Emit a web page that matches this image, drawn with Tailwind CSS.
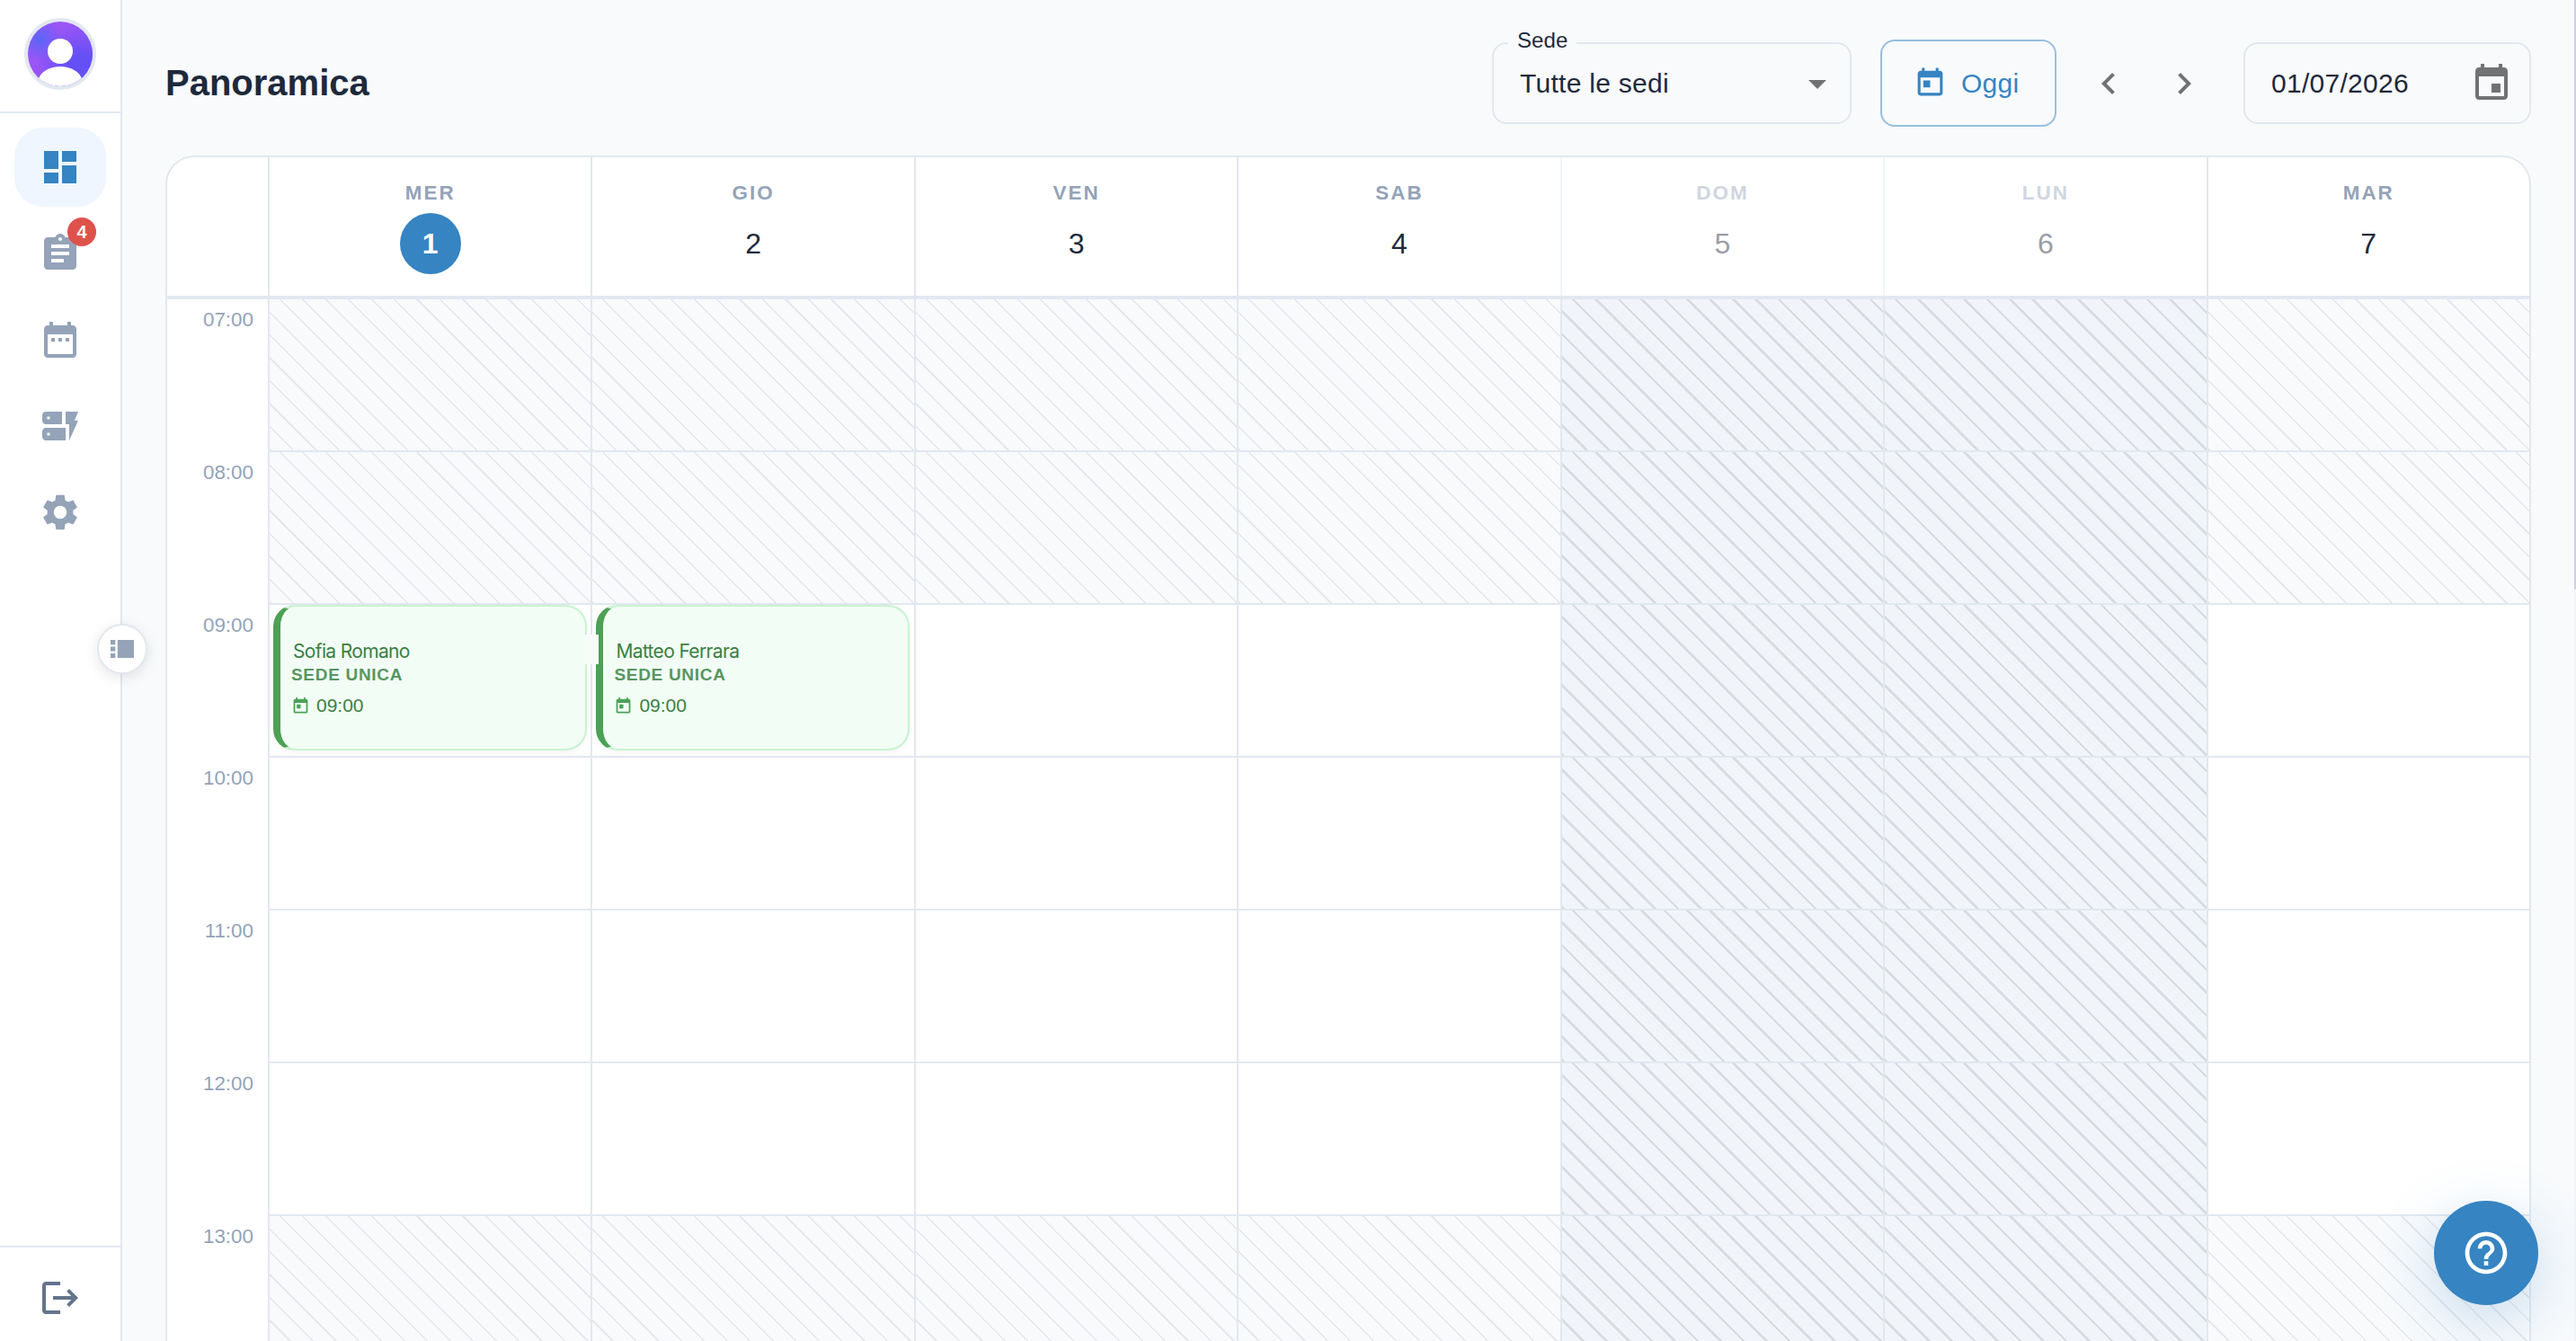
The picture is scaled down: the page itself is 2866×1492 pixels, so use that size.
<!DOCTYPE html>
<html lang="it">
<head>
<meta charset="utf-8">
<title>Panoramica</title>
<script src="https://cdn.jsdelivr.net/npm/@tailwindcss/browser@4"></script>
</head>
<body class="w-[2866px] h-[1492px] overflow-hidden bg-[#f8fafc] font-['Liberation_Sans',Arial,sans-serif] text-[#1e293b] flex relative">

<aside class="w-[136px] shrink-0 h-[1492px] bg-white border-r-2 border-[#e2e8f0] flex flex-col relative">
  <div class="h-[126px] shrink-0 border-b-2 border-[#e2e8f0] flex justify-center pt-5">
    <div class="size-20 rounded-full border-4 border-[#e2e8f0] overflow-hidden">
      <svg class="size-[72px] block" viewBox="0 0 72 72">
        <defs>
          <radialGradient id="a1" cx="0.2" cy="0.28" r="0.32"><stop offset="0" stop-color="#5865f7"/><stop offset="1" stop-color="#5865f7" stop-opacity="0"/></radialGradient>
          <radialGradient id="a2" cx="0.84" cy="0.74" r="0.72"><stop offset="0" stop-color="#6550f6"/><stop offset="0.3" stop-color="#6550f6"/><stop offset="1" stop-color="#6550f6" stop-opacity="0"/></radialGradient>
        </defs>
        <rect width="72" height="72" fill="#9a55f6"/>
        <rect width="72" height="72" fill="url(#a2)"/>
        <rect width="72" height="72" fill="url(#a1)"/>
        <circle cx="36" cy="33" r="14" fill="#fff"/>
        <path d="M11 66C14 55 25 50 36 50s22 5 25 16v6H11z" fill="#fff"/>
      </svg>
    </div>
  </div>
  <nav class="flex flex-col gap-2 pt-4 px-4 grow text-[#94a3b8]">
    <a class="h-[88px] rounded-[32px] bg-[#eff6ff] text-[#3684c2] flex items-center justify-center">
      <svg class="size-12" viewBox="0 0 24 24" fill="currentColor"><path d="M3 13h8V3H3zm0 8h8v-6H3zm10 0h8V11h-8zm0-18v6h8V3z"/></svg>
    </a>
    <a class="h-[88px] flex items-center justify-center relative">
      <svg class="size-12" viewBox="0 0 24 24" fill="currentColor"><path d="M19 3h-4.18C14.4 1.84 13.3 1 12 1s-2.4.84-2.82 2H5c-1.1 0-2 .9-2 2v14c0 1.1.9 2 2 2h14c1.1 0 2-.9 2-2V5c0-1.1-.9-2-2-2m-7 0c.55 0 1 .45 1 1s-.45 1-1 1-1-.45-1-1 .45-1 1-1m2 14H7v-2h7zm3-4H7v-2h10zm0-4H7V7h10z"/></svg>
      <span class="absolute left-[59px] top-1 size-8 rounded-full bg-[#de524c] text-white text-[20px] leading-none font-bold flex items-center justify-center">4</span>
    </a>
    <a class="h-[88px] flex items-center justify-center">
      <svg class="size-12" viewBox="0 0 24 24" fill="currentColor"><path d="M9 11H7v2h2zm4 0h-2v2h2zm4 0h-2v2h2zm2-7h-1V2h-2v2H8V2H6v2H5c-1.11 0-1.99.9-1.99 2L3 20c0 1.1.89 2 2 2h14c1.1 0 2-.9 2-2V6c0-1.1-.9-2-2-2m0 16H5V9h14z"/></svg>
    </a>
    <a class="h-[88px] flex items-center justify-center">
      <svg class="size-12" viewBox="0 0 24 24" fill="currentColor"><path fill-rule="evenodd" d="M17 20v-9h-2V4h7l-2 5h2zm-2-7v7H4c-1.1 0-2-.9-2-2v-3c0-1.1.9-2 2-2zm-8.750 2.750h-1.500v1.500h1.500zM13 4v7H4c-1.1 0-2-.9-2-2V6c0-1.100.9-2 2-2zM6.250 6.750h-1.500v1.500h1.500z"/></svg>
    </a>
    <a class="h-[88px] flex items-center justify-center">
      <svg class="size-12" viewBox="0 0 24 24" fill="currentColor"><path d="M19.14 12.94c.04-.3.06-.61.06-.94 0-.32-.02-.64-.07-.94l2.03-1.58c.18-.14.23-.41.12-.61l-1.92-3.32c-.12-.22-.37-.29-.59-.22l-2.39.96c-.5-.38-1.03-.7-1.62-.94l-.36-2.54c-.04-.24-.24-.41-.48-.41h-3.84c-.24 0-.43.17-.47.41l-.36 2.54c-.59.24-1.13.57-1.62.94l-2.39-.96c-.22-.08-.47 0-.59.22L2.740 8.870c-.12.21-.08.47.12.61l2.030 1.580c-.05.3-.09.63-.09.94s.02.64.07.94l-2.030 1.580c-.18.14-.23.41-.12.61l1.920 3.320c.12.22.37.29.59.22l2.390-.96c.5.38 1.030.7 1.620.94l.36 2.540c.05.24.24.41.48.41h3.840c.24 0 .44-.17.47-.41l.36-2.540c.59-.24 1.130-.56 1.620-.94l2.390.96c.22.08.47 0 .59-.22l1.920-3.320c.12-.22.07-.47-.12-.61zM12 15.600c-1.980 0-3.600-1.620-3.600-3.600s1.620-3.600 3.600-3.600 3.600 1.620 3.600 3.600-1.620 3.600-3.600 3.600"/></svg>
    </a>
  </nav>
  <div class="h-[106px] shrink-0 border-t-2 border-[#e2e8f0] pt-8 flex justify-center text-[#64748b]">
    <svg class="size-12" viewBox="0 0 24 24" fill="currentColor"><path d="m17 7-1.410 1.410L18.170 11H8v2h10.170l-2.580 2.580L17 17l5-5zM4 5h8V3H4c-1.100 0-2 .9-2 2v14c0 1.100.9 2 2 2h8v-2H4z"/></svg>
  </div>
  <button class="absolute left-[108px] top-[694px] size-14 rounded-full bg-white border-2 border-[#e2e8f0] shadow-[0_4px_16px_rgba(0,0,0,0.1)] flex items-center justify-center z-10 text-[#94a3b8]">
    <svg class="w-[26px] h-[20px]" viewBox="0 0 26 20" fill="currentColor"><path d="M0 0h5.300v5.200H0zM0 7.500h5.300v5H0zM0 14.900h5.300V20H0zM7.800 0H26v20H7.800z"/></svg>
  </button>
</aside>

<main class="grow pl-12 flex flex-col min-w-0">
  <header class="h-[173px] shrink-0 flex items-start pr-[50px]">
    <h1 class="text-[40px] leading-[48px] font-bold pt-[68px]">Panoramica</h1>
    <div class="ml-auto flex items-start pt-[44px]">
      <div class="relative mt-[3px] w-[400px] h-[91px] border-2 border-[#e2e8f0] rounded-2xl flex items-center pl-[29px] pr-[26px] text-[30px]">
        <span class="absolute left-4 -top-5 h-8 px-[10px] bg-[#f8fafc] text-[24px] leading-8 tracking-[0.1px]">Sede</span>
        <span class="tracking-[0.28px]">Tutte le sedi</span>
        <svg class="ml-auto w-5 h-[10px] mt-[2px]" viewBox="0 0 20 10"><path d="M0 0h20L10 10z" fill="#717274"/></svg>
      </div>
      <button class="ml-8 w-[196px] h-[97px] border-2 border-[#96bfe1] rounded-2xl flex items-center text-[30px] text-[#3684c2] pl-[35px] gap-4">
        <svg class="size-[37px]" viewBox="0 0 24 24" fill="currentColor"><path d="M19 3h-1V1h-2v2H8V1H6v2H5c-1.110 0-1.990.9-1.990 2L3 19c0 1.100.89 2 2 2h14c1.100 0 2-.9 2-2V5c0-1.100-.9-2-2-2m0 16H5V8h14zM7 10h5v5H7z"/></svg>
        <span class="tracking-[0.28px]">Oggi</span>
      </button>
      <div class="flex gap-9 ml-[34px] mt-[25px] text-[#717274]">
        <svg class="size-12" viewBox="0 0 24 24" fill="currentColor"><path d="M15.410 7.410 14 6l-6 6 6 6 1.410-1.410L10.830 12z"/></svg>
        <svg class="size-12" viewBox="0 0 24 24" fill="currentColor"><path d="M10 6 8.590 7.410 13.170 12l-4.580 4.590L10 18l6-6z"/></svg>
      </div>
      <div class="ml-[42px] mt-[3px] w-[320px] h-[91px] border-2 border-[#e2e8f0] rounded-2xl flex items-center pl-[29px] pr-[18px] text-[30px]">
        <span class="tracking-[0.28px]">01/07/2026</span>
        <svg class="ml-auto size-12 text-[#717274]" viewBox="0 0 24 24" fill="currentColor"><path d="M17 12h-5v5h5zM16 1v2H8V1H6v2H5c-1.110 0-1.990.9-1.990 2L3 19c0 1.100.89 2 2 2h14c1.100 0 2-.9 2-2V5c0-1.100-.9-2-2-2h-1V1zm3 18H5V8h14z"/></svg>
      </div>
    </div>
  </header>

  <section class="w-[2632px] h-[1319px] shrink-0 bg-white border-2 border-b-0 border-[#e2e8f0] rounded-t-[32px] overflow-hidden">
    <div id="days" class="h-[158px] border-b-4 border-[#e2e8f0] grid grid-cols-[112px_repeat(7,minmax(0,1fr))]"><div></div></div>
    <div id="rows"></div>
  </section>
</main>

<div class="absolute right-0 top-0 w-[2px] h-[1492px] bg-[#f1f5f9]"><div class="h-[656px] bg-[#cbd5e1] rounded-b-full"></div></div>

<button class="absolute left-[2708px] top-[1336px] size-[116px] rounded-full bg-[#3684c2] text-white flex items-center justify-center shadow-[0_16px_64px_rgba(54,132,194,0.25)]">
  <svg class="size-14" viewBox="0 0 24 24" fill="currentColor"><path d="M11 18h2v-2h-2zm1-16C6.480 2 2 6.480 2 12s4.480 10 10 10 10-4.480 10-10S17.520 2 12 2m0 18c-4.410 0-8-3.590-8-8s3.590-8 8-8 8 3.590 8 8-3.590 8-8 8m0-14c-2.210 0-4 1.790-4 4h2c0-1.100.9-2 2-2s2 .9 2 2c0 2-3 1.750-3 5h2c0-2.250 3-2.500 3-5 0-2.210-1.790-4-4-4"/></svg>
</button>

<script>
const days = ['MER','GIO','VEN','SAB','DOM','LUN','MAR'];
const closed = i => i === 4 || i === 5;
document.getElementById('days').innerHTML += days.map((d, i) => `
  <div class="border-l-2 ${closed(i) ? 'border-[#f1f5f9]' : 'border-[#e2e8f0]'} flex flex-col items-center pt-[27px]">
    <div class="text-[22.4px] leading-[26px] font-bold tracking-[2px] ${closed(i) ? 'text-[#cfd6e0]' : 'text-[#94a3b8]'}">${d}</div>
    <div class="mt-[9px] size-[68px] rounded-full text-[32px] leading-none flex items-center justify-center ${i === 0 ? 'bg-[#3684c2] text-white font-bold' : closed(i) ? 'text-[#9a9ea6]' : ''}">${i + 1}</div>
  </div>`).join('');

const light = 'bg-[#f8fafc] bg-[repeating-linear-gradient(45deg,#e6e8ee_0px,#e6e8ee_1.6px,transparent_1.6px,transparent_18px)]';
const dark = 'bg-[#f1f5fa] bg-[repeating-linear-gradient(45deg,#d8dce2_0px,#d8dce2_2.6px,transparent_2.6px,transparent_18px)]';
const events = { '9-0': 'Sofia Romano', '9-1': 'Matteo Ferrara' };
const card = (name, first) => `
  <div class="relative mx-1 w-[349px] h-[162px] rounded-[24px] border-2 border-l-8 border-[#c8f3d2] border-l-[#4ca154] bg-[#f2fdf5] shadow-[0_2px_6px_rgba(0,0,0,0.05)] pl-[14px] pt-[37px] text-[#3a8043]">
    <div class="font-['Inter',sans-serif] text-[21px] leading-[26px] tracking-[-0.65px]">${name}</div>
    <div class="text-[19px] leading-[24px] mt-px -ml-[2px] font-bold tracking-[0.7px] text-[#579661]">SEDE UNICA</div>
    <div class="flex items-center mt-[10px] text-[21px] leading-[24px]">
      <svg class="size-[21px] -ml-[2px] mr-[7px] text-[#4ca154]" viewBox="0 0 24 24" fill="currentColor"><path d="M19 3h-1V1h-2v2H8V1H6v2H5c-1.110 0-1.990.9-1.990 2L3 19c0 1.100.89 2 2 2h14c1.100 0 2-.9 2-2V5c0-1.100-.9-2-2-2m0 16H5V8h14zM7 10h5v5H7z"/></svg>
      <span>09:00</span>
    </div>
    ${first ? '<div class="absolute left-[339px] top-[31px] w-[15px] h-[33px] bg-[#f7fcf9] z-10"></div>' : ''}
  </div>`;
let out = '';
for (let h = 7; h < 14; h++) {
  out += `<div class="h-[170px] grid grid-cols-[112px_repeat(7,minmax(0,1fr))]">
    <div class="text-right pr-4 pt-[9px] text-[22.4px] leading-[28px] text-[#94a3b8]">${String(h).padStart(2, '0')}:00</div>`;
  for (let i = 0; i < 7; i++) {
    const ev = events[h + '-' + i];
    const fill = closed(i) ? dark : (h < 9 || h === 13) ? light : 'bg-white';
    out += `<div class="border-l-2 border-b-2 border-[#e2e8f0] ${fill}">${ev ? card(ev, i === 0) : ''}</div>`;
  }
  out += '</div>';
}
document.getElementById('rows').innerHTML = out;
</script>
</body>
</html>
